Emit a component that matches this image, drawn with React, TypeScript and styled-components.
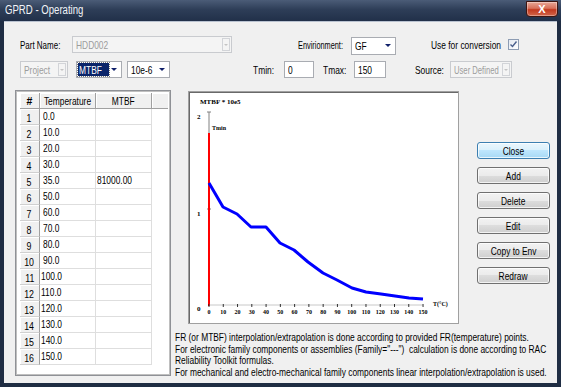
import { createGlobalStyle, styled } from 'styled-components';

const FONT = `"Liberation Sans", Arial, sans-serif`;
const CHART_FONT = `"Liberation Serif", "Times New Roman", serif`;

const GlobalStyle = createGlobalStyle`
  html, body {
    margin: 0;
    padding: 0;
    background: #ffffff;
    overflow: hidden;
  }
  body {
    font-family: ${FONT};
  }
`;

// The dialog uses a narrow UI font; Liberation Sans squeezed horizontally stands in for it.
const Txt = styled.span<{ $center?: boolean; $sx?: number }>`
  display: inline-block;
  white-space: nowrap;
  transform: scaleX(${p => p.$sx ?? 0.8});
  transform-origin: ${p => (p.$center ? 'center' : 'left')} center;
`;

const Window = styled.div`
  width: 561px;
  height: 387px;
  box-sizing: border-box;
  display: flex;
  flex-direction: column;
  padding: 0 4px 4px;
  background: #1f2d43;
  overflow: hidden;
`;

const TitleBar = styled.div`
  height: 21px;
  flex: none;
  margin: 0 -4px;
  padding: 0 3px 0 5px;
  display: flex;
  align-items: flex-start;
  justify-content: space-between;
  background: linear-gradient(#4b5c77 0%, #2e3e58 45%, #213049 100%);
`;

const Title = styled.span`
  margin-top: 3px;
  font-size: 12px;
  color: #f2f4f8;
`;

const CloseBox = styled.div`
  width: 32px;
  height: 16px;
  margin-top: 1px;
  box-sizing: border-box;
  border: 1px solid #3d1510;
  border-radius: 0 0 4px 4px;
  background: linear-gradient(#e7a797 0%, #d7705a 45%, #c2391f 55%, #d2664a 100%);
  box-shadow: inset 0 0 0 1px rgba(255, 255, 255, 0.35);
  display: flex;
  align-items: center;
  justify-content: center;
  color: #ffffff;
  font: bold 11px ${FONT};
`;

const Client = styled.div`
  flex: 1;
  display: flex;
  flex-direction: column;
  padding: 15px 0 0 11px;
  background: #f0f0f0;
  box-shadow: inset 0 1px 0 #b9c2d0;
  font-size: 10.5px;
  color: #000000;
`;

const FormRow = styled.div<{ $mt?: number }>`
  height: 17px;
  display: flex;
  align-items: center;
  padding-left: 5px;
  margin-top: ${p => p.$mt ?? 0}px;
`;

const Label = styled.span<{ $w: number; $ml?: number }>`
  width: ${p => p.$w}px;
  margin-left: ${p => p.$ml ?? 0}px;
  flex: none;
  white-space: nowrap;
`;

const Combo = styled.div<{ $w: number; $ml?: number; $disabled?: boolean; $dy?: number }>`
  width: ${p => p.$w}px;
  height: ${p => (p.$dy ? 18 : 17)}px;
  margin-left: ${p => p.$ml ?? 0}px;
  margin-top: ${p => (p.$dy ?? 0) * 2}px;
  flex: none;
  box-sizing: border-box;
  display: flex;
  align-items: center;
  border: 1px solid ${p => (p.$disabled ? '#c9cbcf' : '#a9acb2')};
  background: ${p => (p.$disabled ? '#f4f4f4' : '#ffffff')};
  color: ${p => (p.$disabled ? '#9c9c9c' : '#000000')};
`;

const ComboText = styled.span<{ $selected?: boolean }>`
  flex: 1;
  min-width: 0;
  margin-left: ${p => (p.$selected ? 1 : 3)}px;
  white-space: nowrap;
  display: flex;
  align-items: center;
`;

const Selection = styled.span`
  width: 31px;
  height: 13px;
  display: flex;
  align-items: center;
  padding-left: 1px;
  box-sizing: border-box;
  background: #0a246a;
  color: #ffffff;
  outline: 1px dotted #7a7a7a;
`;

const Arrow = styled.span`
  flex: none;
  width: 0;
  height: 0;
  margin-right: 4px;
  border-left: 3px solid transparent;
  border-right: 3px solid transparent;
  border-top: 3px solid #10206a;
`;

const DropButton = styled.span`
  flex: none;
  align-self: stretch;
  width: 8px;
  margin: 1px 1px 1px 0;
  box-sizing: border-box;
  border: 1px solid #d2d4d8;
  background: #f4f4f4;
  display: flex;
  align-items: center;
  justify-content: center;
  &::after {
    content: '';
    border-left: 2px solid transparent;
    border-right: 2px solid transparent;
    border-top: 2px solid #c4c4c4;
  }
`;

const TextBox = styled.div<{ $w: number }>`
  width: ${p => p.$w}px;
  height: 17px;
  flex: none;
  box-sizing: border-box;
  padding-left: 3px;
  display: flex;
  align-items: center;
  border: 1px solid #a9acb2;
  background: #ffffff;
`;

const CheckBox = styled.span`
  width: 11px;
  height: 11px;
  flex: none;
  box-sizing: border-box;
  border: 1px solid #8d9cb3;
  background: linear-gradient(135deg, #e3e9f1, #ffffff);
  display: flex;
  svg {
    display: block;
  }
`;

const Main = styled.div`
  flex: 1;
  display: flex;
  margin-top: 12px;
`;

const GridFrame = styled.div`
  width: 156px;
  height: 286px;
  flex: none;
  box-sizing: border-box;
  border: 1px solid #8f9196;
  box-shadow: inset 1px 1px 0 #bfbfbf, inset -1px -1px 0 #bfbfbf;
  background: #ffffff;
  padding: 2px 0 0 4px;
`;

const Grid = styled.div`
  display: grid;
  grid-template-columns: 20px 56px 56px 16px;
  grid-auto-rows: 16px;
`;

const HeadCell = styled.div<{ $filler?: boolean }>`
  box-sizing: border-box;
  display: flex;
  align-items: center;
  justify-content: center;
  background: #f0f0f0;
  border-right: ${p => (p.$filler ? 'none' : '1px solid #a0a0a0')};
  border-bottom: 1px solid #a0a0a0;
  box-shadow: inset 1px 1px 0 #ffffff;
  white-space: nowrap;
`;

const NumCell = styled.div`
  box-sizing: border-box;
  display: flex;
  align-items: center;
  justify-content: center;
  padding-top: 2px;
  font-size: 11px;
  background: #f0f0f0;
  border-right: 1px solid #a0a0a0;
  border-bottom: 1px solid #d0d0d0;
  box-shadow: inset 1px 1px 0 #ffffff;
`;

const DataCell = styled.div<{ $pad?: number }>`
  box-sizing: border-box;
  display: flex;
  align-items: center;
  padding-left: ${p => p.$pad ?? 2}px;
  padding-bottom: 1px;
  border-right: 1px solid #dedede;
  border-bottom: 1px solid #dedede;
  white-space: nowrap;
`;

const Filler = styled.div``;

const RightCol = styled.div`
  margin-left: 4px;
  width: 378px;
  display: flex;
  flex-direction: column;
`;

const ChartRow = styled.div`
  display: flex;
`;

const ChartFrame = styled.div`
  width: 271px;
  height: 233px;
  margin: 1px 0 0 13px;
  flex: none;
  box-sizing: border-box;
  border: 1px solid #a0a0a0;
  box-shadow: inset 1px 1px 0 #696969;
  background: #ffffff;
  padding: 1px 0 0 1px;
  svg {
    display: block;
  }
`;

const ButtonColumn = styled.div`
  margin-left: 18px;
  padding-top: 52px;
  display: flex;
  flex-direction: column;
  gap: 8px;
`;

const Button = styled.button<{ $default?: boolean }>`
  width: 73px;
  height: 17px;
  padding: 0;
  box-sizing: border-box;
  font-family: ${FONT};
  font-size: 10.5px;
  color: #000000;
  border: 1px solid ${p => (p.$default ? '#3c7fb1' : '#707070')};
  border-radius: 3px;
  background: ${p =>
    p.$default
      ? 'linear-gradient(#eaf6fd 0%, #d9f0fc 50%, #bee6fd 50%, #a7d9f5 100%)'
      : 'linear-gradient(#f2f2f2 0%, #ebebeb 50%, #dddddd 50%, #cfcfcf 100%)'};
  box-shadow: inset 0 0 0 1px rgba(255, 255, 255, 0.75);
`;

const Notes = styled.div`
  margin-top: 8px;
  display: flex;
  flex-direction: column;
  line-height: 11.5px;
`;

const temps = ['0.0', '10.0', '20.0', '30.0', '35.0', '50.0', '60.0', '70.0', '80.0', '90.0', '100.0', '110.0', '120.0', '130.0', '140.0', '150.0'];

const notes = [
  'FR (or MTBF) interpolation/extrapolation is done according to provided FR(temperature) points.',
  'For electronic family components or assemblies (Family="---")\u00a0 calculation is done according to RAC',
  'Reliability Toolkit formulas.',
  'For mechanical and electro-mechanical family components linear interpolation/extrapolation is used.',
];

const curve: [number, number][] = [
  [209, 183], [223, 207], [237, 214], [251, 227], [266, 227], [280, 243], [294, 250], [308, 262],
  [323, 273], [337, 280], [352, 288], [366, 292], [381, 294], [395, 296], [409, 298], [423, 299],
];

const chartText = { fontFamily: CHART_FONT, fontSize: 7, fontWeight: 700, fill: '#000' } as const;

function Chart() {
  const ticks = Array.from({ length: 16 }, (_, i) => i);
  return (
    <svg width={267} height={229} viewBox="190 93 267 229">
      <text x={200} y={104} style={chartText}>MTBF * 10e5</text>
      <text x={197} y={119} style={chartText}>2</text>
      <text x={197} y={216} style={chartText}>1</text>
      <text x={197} y={311} style={chartText}>0</text>
      <line x1={209} y1={112} x2={209} y2={305} stroke="#808080" strokeWidth={1} />
      <line x1={207} y1={112} x2={211} y2={112} stroke="#808080" strokeWidth={1} />
      <line x1={207} y1={209} x2={211} y2={209} stroke="#808080" strokeWidth={1} />
      <line x1={209} y1={133} x2={209} y2={306} stroke="#ff0000" strokeWidth={2} />
      <text x={212} y={130} style={{ ...chartText, fontSize: 6 }}>Tmin</text>
      <line x1={209} y1={305} x2={423} y2={305} stroke="#c8c8c8" strokeWidth={1} />
      {ticks.map(i => {
        const x = 209 + i * 14.27;
        return (
          <g key={i}>
            <line x1={x} y1={304} x2={x} y2={307} stroke="#000" strokeWidth={0.8} />
            <text x={x} y={314} textAnchor="middle" style={{ ...chartText, fontSize: 6 }}>
              {i * 10}
            </text>
          </g>
        );
      })}
      <text x={433} y={306} style={{ ...chartText, fontSize: 6 }}>T(°C)</text>
      <polyline
        points={curve.map(p => p.join(',')).join(' ')}
        fill="none"
        stroke="#0000ff"
        strokeWidth={3}
        strokeLinejoin="round"
      />
    </svg>
  );
}

function Row({ index, temp, mtbf }: { index: number; temp: string; mtbf: string }) {
  return (
    <>
      <NumCell>
        <Txt $center>{index}</Txt>
      </NumCell>
      <DataCell $pad={temp.length > 4 ? 1 : 3}>
        <Txt>{temp}</Txt>
      </DataCell>
      <DataCell $pad={1}>
        <Txt>{mtbf}</Txt>
      </DataCell>
      <Filler />
    </>
  );
}

export default function App() {
  return (
    <>
      <GlobalStyle />
      <Window>
        <TitleBar>
          <Title>
            <Txt>GPRD - Operating</Txt>
          </Title>
          <CloseBox>X</CloseBox>
        </TitleBar>
        <Client>
          <FormRow>
            <Label $w={52}>
              <Txt $sx={0.76}>Part Name:</Txt>
            </Label>
            <Combo $w={160} $disabled>
              <ComboText>
                <Txt>HDD002</Txt>
              </ComboText>
              <DropButton />
            </Combo>
            <Label $w={53} $ml={66}>
              <Txt $sx={0.7}>Envirionment:</Txt>
            </Label>
            <Combo $w={45} $dy={1}>
              <ComboText>
                <Txt>GF</Txt>
              </ComboText>
              <Arrow />
            </Combo>
            <Label $w={77} $ml={35}>
              <Txt>Use for conversion</Txt>
            </Label>
            <CheckBox>
              <svg width={9} height={9} viewBox="0 0 9 9">
                <path d="M1.5 4.5 L3.5 6.5 L7.5 1.5" fill="none" stroke="#4a5f8c" strokeWidth={1.4} />
              </svg>
            </CheckBox>
          </FormRow>
          <FormRow $mt={8}>
            <Combo $w={48} $disabled>
              <ComboText>
                <Txt>Project</Txt>
              </ComboText>
              <DropButton />
            </Combo>
            <Combo $w={46} $ml={8}>
              <ComboText $selected>
                <Selection>
                  <Txt>MTBF</Txt>
                </Selection>
              </ComboText>
              <Arrow />
            </Combo>
            <Combo $w={43} $ml={5}>
              <ComboText>
                <Txt>10e-6</Txt>
              </ComboText>
              <Arrow />
            </Combo>
            <Label $w={31} $ml={83}>
              <Txt>Tmin:</Txt>
            </Label>
            <TextBox $w={30}>
              <Txt>0</Txt>
            </TextBox>
            <Label $w={31} $ml={9}>
              <Txt>Tmax:</Txt>
            </Label>
            <TextBox $w={32}>
              <Txt>150</Txt>
            </TextBox>
            <Label $w={35} $ml={29}>
              <Txt>Source:</Txt>
            </Label>
            <Combo $w={62} $disabled>
              <ComboText>
                <Txt $sx={0.73}>User Defined</Txt>
              </ComboText>
              <DropButton />
            </Combo>
          </FormRow>
          <Main>
            <GridFrame>
              <Grid>
                <HeadCell>
                  <b>#</b>
                </HeadCell>
                <HeadCell>
                  <Txt $center>Temperature</Txt>
                </HeadCell>
                <HeadCell>
                  <Txt $center>MTBF</Txt>
                </HeadCell>
                <HeadCell $filler />
                {temps.map((t, i) => (
                  <Row key={t} index={i + 1} temp={t} mtbf={t === '35.0' ? '81000.00' : ''} />
                ))}
              </Grid>
            </GridFrame>
            <RightCol>
              <ChartRow>
                <ChartFrame>
                  <Chart />
                </ChartFrame>
                <ButtonColumn>
                  {['Close', 'Add', 'Delete', 'Edit', 'Copy to Env', 'Redraw'].map(label => (
                    <Button key={label} $default={label === 'Close'}>
                      <Txt $center>{label}</Txt>
                    </Button>
                  ))}
                </ButtonColumn>
              </ChartRow>
              <Notes>
                {notes.map(line => (
                  <div key={line}>
                    <Txt>{line}</Txt>
                  </div>
                ))}
              </Notes>
            </RightCol>
          </Main>
        </Client>
      </Window>
    </>
  );
}
